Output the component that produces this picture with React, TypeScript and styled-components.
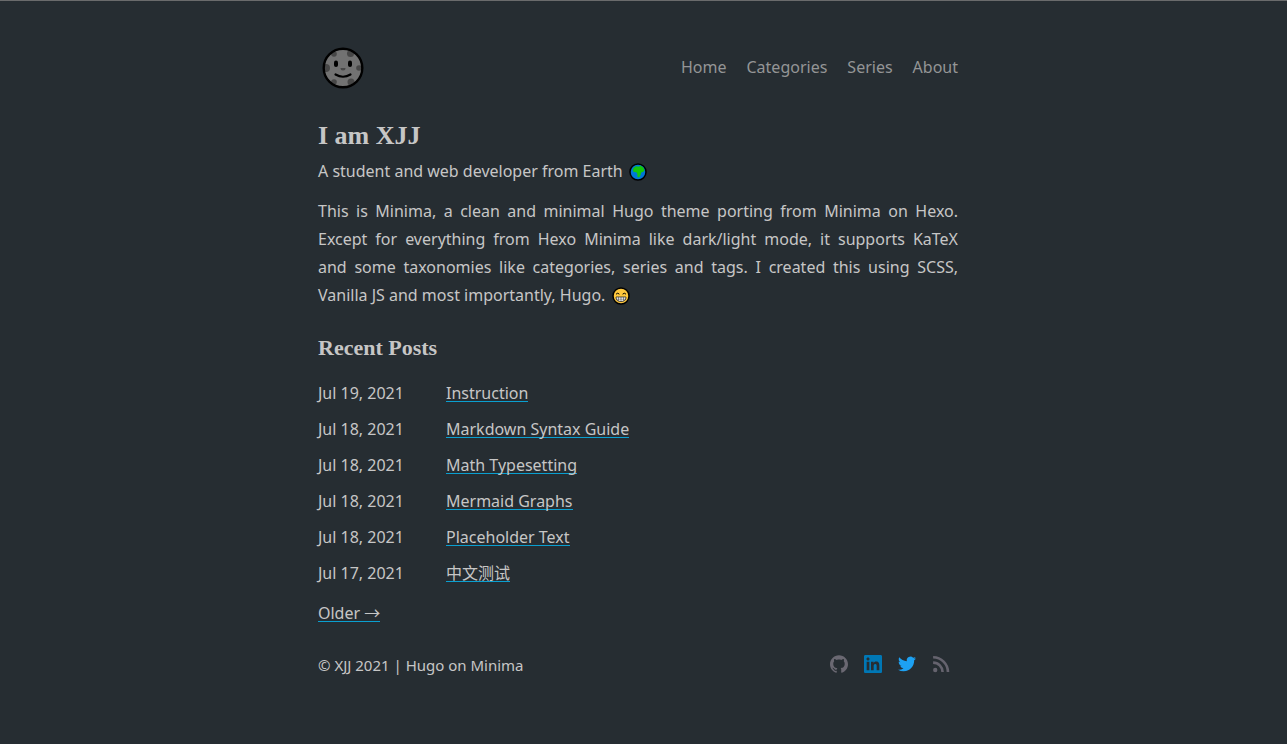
import React from "react";
import styled, { createGlobalStyle } from "styled-components";

const GlobalStyle = createGlobalStyle`
  *, *::before, *::after { box-sizing: border-box; }
  body {
    margin: 0;
    background: #262d32;
    color: #c6c6c6;
    font: 16px/28px "Noto Sans", "Noto Sans CJK SC", sans-serif;
  }
`;

const Page = styled.div`
  border-top: 1px solid #6a6b6c;
  padding: 39px 27px 40px 16px;
`;

const Column = styled.div`
  max-width: 640px;
  margin: 0 auto;
`;

const Header = styled.header`
  display: flex;
  align-items: center;
  justify-content: space-between;
  height: 56px;
`;

const ThemeToggle = styled.button`
  border: 0;
  padding: 0 4px;
  background: none;
  cursor: pointer;
  svg { display: block; }
`;

const Nav = styled.nav`
  display: flex;
  gap: 20px;
  padding-bottom: 2px;
`;

const NavLink = styled.a`
  color: #949596;
  text-decoration: none;
`;

const Title = styled.h1`
  margin: 22px 0 0;
  font: bold 26px/36px "Liberation Serif", serif;
`;

const Subtitle = styled.h2`
  margin: 24px 0 0;
  font: bold 22px/30px "Liberation Serif", serif;
`;

const Tagline = styled.p`
  margin: 3px 0 12px;
`;

const Intro = styled.p`
  margin: 0;
  text-align: justify;
`;

const Emoji = styled.svg`
  width: 18px;
  height: 18px;
  margin-left: 2px;
  vertical-align: -4px;
`;

const Posts = styled.ul`
  display: grid;
  gap: 8px;
  margin: 16px 0 12px;
  padding: 0;
  list-style: none;
`;

const Post = styled.li`
  display: flex;
`;

const PostDate = styled.time`
  flex: 0 0 128px;
`;

const TextLink = styled.a`
  display: inline-block;
  color: inherit;
  text-decoration: none;
  background: linear-gradient(#0a9fd0, #0a9fd0) 0 22px / 100% 1px no-repeat;
`;

const Footer = styled.footer`
  display: flex;
  align-items: center;
  justify-content: space-between;
  margin-top: 24px;
  font-size: 15px;
`;

const Socials = styled.div`
  display: flex;
  gap: 16px;
  padding: 0 8px 2px 0;
`;

const SocialLink = styled.a<{ $color: string }>`
  color: ${(p) => p.$color};
  svg { display: block; width: 18px; height: 18px; fill: currentColor; }
`;

const Moon = () => (
  <svg width="42" height="42" viewBox="0 0 42 42" aria-hidden="true">
    <defs>
      <clipPath id="moon"><circle cx="21" cy="21" r="18.5" /></clipPath>
    </defs>
    <circle cx="21" cy="21" r="19" fill="#727272" />
    <g fill="#474747" clipPath="url(#moon)">
      <circle cx="12" cy="7" r="2.8" />
      <circle cx="28.500" cy="6.500" r="3.500" />
      <circle cx="4" cy="21" r="4" />
      <circle cx="37" cy="21" r="2.800" />
      <circle cx="12" cy="35" r="2.800" />
      <circle cx="29" cy="35" r="3.500" />
      <path d="M18.500 21h5a2.500 2.500 0 0 1-5 0z" />
    </g>
    <circle cx="21" cy="21" r="19.300" fill="none" stroke="#000" strokeWidth="2.400" />
    <rect x="12" y="13.500" width="4" height="6.500" rx="2" />
    <rect x="26" y="13.500" width="4" height="6.500" rx="2" />
    <path d="M13.500 27.500q7.500 4.500 15 0" fill="none" stroke="#000" strokeWidth="2.200" strokeLinecap="round" />
  </svg>
);

const Earth = () => (
  <Emoji viewBox="0 0 18 18" role="img" aria-label="Earth">
    <circle cx="9" cy="9" r="8" fill="#0078d7" stroke="#000" strokeWidth="1.500" />
    <path d="M4.500 5 7 3.300l3 .4 1.500-1.200 3 2.300 1 3-1.700 1.200-1.600.5-.6 2.500-1.600 2.500-1.500-.5-.3-3.500-1-1.200-2.600-.2L3.800 7z" fill="#16c60c" />
  </Emoji>
);

const Grin = () => (
  <Emoji viewBox="0 0 18 18" role="img" aria-label="Grinning face">
    <circle cx="9" cy="9" r="8" fill="#ffc83d" stroke="#000" strokeWidth="1.500" />
    <path d="M4 7.200q1.700-2 3.400 0M10.600 7.200q1.700-2 3.400 0" fill="none" stroke="#000" strokeWidth="1" />
    <path d="M4 10h10q0 4.500-5 4.500T4 10z" fill="#fff" stroke="#222" strokeWidth=".8" />
    <path d="M4.300 12.200h9.400M6.500 10v4M9 10v4.500M11.500 10v4" stroke="#333" strokeWidth=".5" />
  </Emoji>
);

const navItems = ["Home", "Categories", "Series", "About"];

const posts = [
  ["Jul 19, 2021", "2021-07-19", "Instruction"],
  ["Jul 18, 2021", "2021-07-18", "Markdown Syntax Guide"],
  ["Jul 18, 2021", "2021-07-18", "Math Typesetting"],
  ["Jul 18, 2021", "2021-07-18", "Mermaid Graphs"],
  ["Jul 18, 2021", "2021-07-18", "Placeholder Text"],
  ["Jul 17, 2021", "2021-07-17", "中文测试"],
];

const socials = [
  {
    name: "GitHub",
    color: "#6a6872",
    icon: <path d="M12 .297c-6.630 0-12 5.373-12 12 0 5.303 3.438 9.800 8.205 11.385.6.113.82-.258.82-.577 0-.285-.01-1.040-.015-2.040-3.338.724-4.042-1.610-4.042-1.610C4.422 18.070 3.633 17.700 3.633 17.700c-1.087-.744.084-.729.084-.729 1.205.084 1.838 1.236 1.838 1.236 1.070 1.835 2.809 1.305 3.495.998.108-.776.417-1.305.76-1.605-2.665-.3-5.466-1.332-5.466-5.930 0-1.310.465-2.380 1.235-3.220-.135-.303-.54-1.523.105-3.176 0 0 1.005-.322 3.300 1.230.96-.267 1.980-.399 3-.405 1.020.006 2.040.138 3 .405 2.280-1.552 3.285-1.230 3.285-1.230.645 1.653.24 2.873.12 3.176.765.840 1.230 1.910 1.230 3.220 0 4.610-2.805 5.625-5.475 5.920.42.360.81 1.096.81 2.220 0 1.606-.015 2.896-.015 3.286 0 .315.21.690.825.570C20.565 22.092 24 17.592 24 12.297c0-6.627-5.373-12-12-12" />,
  },
  {
    name: "LinkedIn",
    color: "#0077b5",
    icon: <path d="M20.447 20.452h-3.554v-5.569c0-1.328-.027-3.037-1.852-3.037-1.853 0-2.136 1.445-2.136 2.939v5.667H9.351V9h3.414v1.561h.046c.477-.9 1.637-1.850 3.370-1.850 3.601 0 4.267 2.370 4.267 5.455v6.286zM5.337 7.433c-1.144 0-2.063-.926-2.063-2.065 0-1.138.92-2.063 2.063-2.063 1.140 0 2.064.925 2.064 2.063 0 1.139-.925 2.065-2.064 2.065zm1.782 13.019H3.555V9h3.564v11.452zM22.225 0H1.771C.792 0 0 .774 0 1.729v20.542C0 23.227.792 24 1.771 24h20.451C23.200 24 24 23.227 24 22.271V1.729C24 .774 23.200 0 22.222 0h.003z" />,
  },
  {
    name: "Twitter",
    color: "#1da1f2",
    icon: <path d="M23.953 4.570a10 10 0 01-2.825.775 4.958 4.958 0 002.163-2.723c-.951.555-2.005.959-3.127 1.184a4.920 4.920 0 00-8.384 4.482C7.690 8.095 4.067 6.130 1.640 3.162a4.822 4.822 0 00-.666 2.475c0 1.710.87 3.213 2.188 4.096a4.904 4.904 0 01-2.228-.616v.06a4.923 4.923 0 003.946 4.827 4.996 4.996 0 01-2.212.085 4.936 4.936 0 004.604 3.417 9.867 9.867 0 01-6.102 2.105c-.39 0-.779-.023-1.170-.067a13.995 13.995 0 007.557 2.209c9.053 0 13.998-7.496 13.998-13.985 0-.21 0-.42-.015-.63A9.935 9.935 0 0024 4.590z" />,
  },
  {
    name: "RSS",
    color: "#65636e",
    icon: (
      <>
        <circle cx="4.300" cy="20" r="2.900" />
        <path d="M1.500 3A20 20 0 0 1 21.300 22.800M1.500 10.200A12.700 12.700 0 0 1 14.100 22.800" fill="none" stroke="currentColor" strokeWidth="3.500" />
      </>
    ),
  },
];

export default function App() {
  return (
    <>
      <GlobalStyle />
      <Page>
        <Column>
          <Header>
            <ThemeToggle type="button" aria-label="Toggle theme"><Moon /></ThemeToggle>
            <Nav>
              {navItems.map((item) => <NavLink key={item} href="#">{item}</NavLink>)}
            </Nav>
          </Header>
          <main>
            <Title>I am XJJ</Title>
            <Tagline>A student and web developer from Earth <Earth /></Tagline>
            <Intro>
              This is Minima, a clean and minimal Hugo theme porting from Minima on Hexo.
              Except for everything from Hexo Minima like dark/light mode, it supports KaTeX
              and&nbsp;some taxonomies like categories, series and tags. I created this using SCSS,
              Vanilla&nbsp;JS and most importantly, Hugo. <Grin />
            </Intro>
            <Subtitle>Recent Posts</Subtitle>
            <Posts>
              {posts.map(([date, iso, title]) => (
                <Post key={title}>
                  <PostDate dateTime={iso}>{date}</PostDate>
                  <TextLink href="#">{title}</TextLink>
                </Post>
              ))}
            </Posts>
            <TextLink href="#">Older →</TextLink>
          </main>
          <Footer>
            <span>© XJJ 2021 | Hugo on Minima</span>
            <Socials>
              {socials.map((s) => (
                <SocialLink key={s.name} href="#" aria-label={s.name} $color={s.color}>
                  <svg viewBox="0 0 24 24" aria-hidden="true">{s.icon}</svg>
                </SocialLink>
              ))}
            </Socials>
          </Footer>
        </Column>
      </Page>
    </>
  );
}
